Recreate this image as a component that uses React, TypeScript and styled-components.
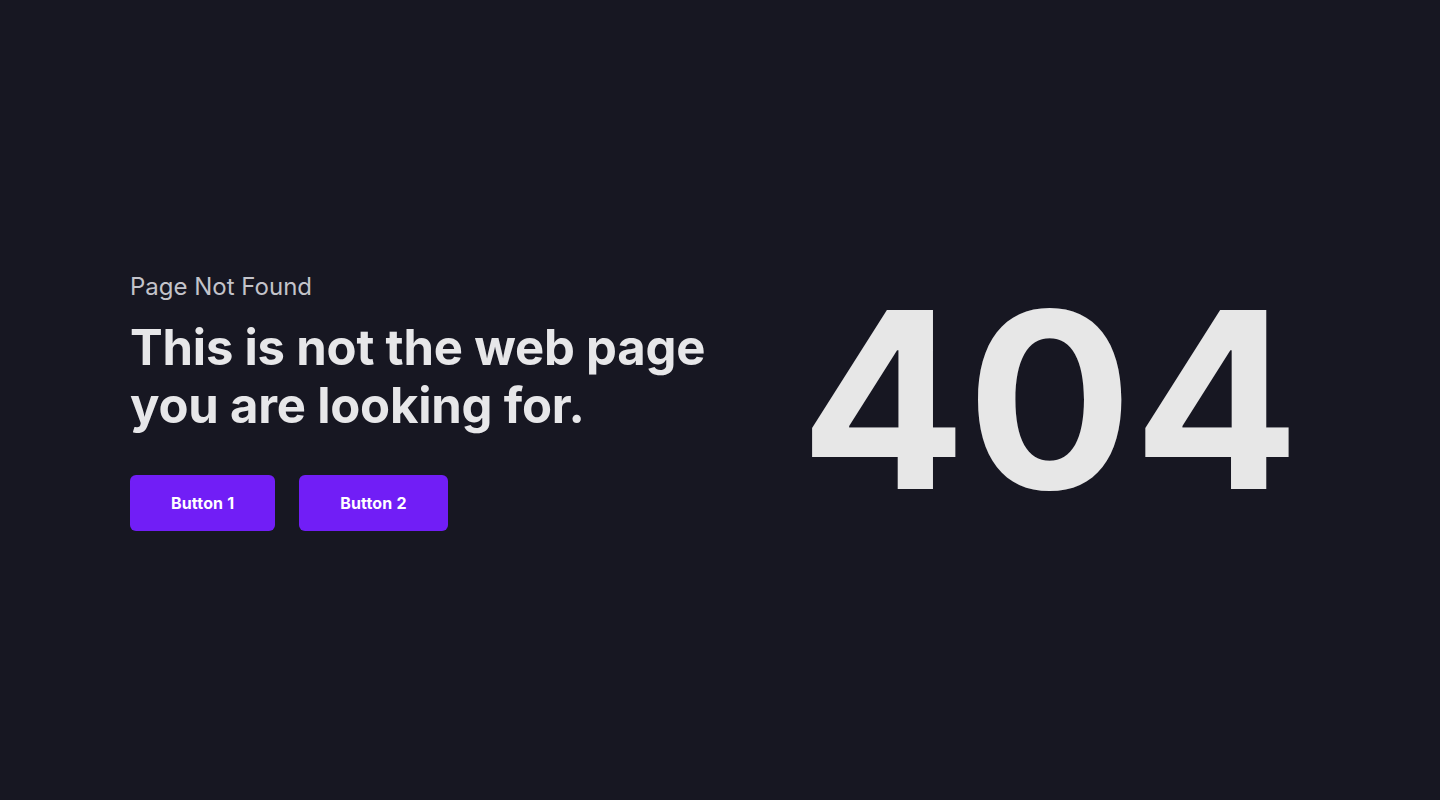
import React from "react";
import styled, { createGlobalStyle } from "styled-components";

const GlobalStyle = createGlobalStyle`
  html, body {
    margin: 0;
    padding: 0;
    background: #171722;
  }
  body {
    font-family: Inter, "Noto Sans", sans-serif;
  }
`;

const Page = styled.main`
  box-sizing: border-box;
  min-height: 100vh;
  padding: 0 130px;
  display: flex;
  align-items: center;
  justify-content: space-between;
  background: #171722;
`;

const Info = styled.section`
  display: flex;
  flex-direction: column;
  align-items: flex-start;
  margin-top: 2px;
`;

const Eyebrow = styled.p`
  margin: 0;
  font-size: 24px;
  line-height: 30px;
  font-weight: 400;
  color: #c3c3ca;
`;

const Heading = styled.h1`
  margin: 17px 0 0;
  font-size: 49px;
  line-height: 58px;
  font-weight: 700;
  color: #e7e7e9;
  letter-spacing: -0.2px;
`;

const Actions = styled.div`
  display: flex;
  gap: 24px;
  margin-top: 40px;
`;

const Button = styled.button`
  height: 56px;
  padding: 0 41px;
  border: none;
  border-radius: 6px;
  background: #711ef6;
  color: #ffffff;
  font-family: Inter, "Noto Sans", sans-serif;
  font-size: 16px;
  font-weight: 700;
  letter-spacing: 0.15px;
  cursor: pointer;
`;

const Code = styled.div`
  font-size: 246px;
  line-height: 1;
  font-weight: 700;
  color: #e7e7e7;
  letter-spacing: 0.5px;
  padding-right: 10px;
`;

export default function App() {
  return (
    <>
      <GlobalStyle />
      <Page>
        <Info>
          <Eyebrow>Page Not Found</Eyebrow>
          <Heading>
            This is not the web page
            <br />
            you are looking for.
          </Heading>
          <Actions>
            <Button>Button 1</Button>
            <Button>Button 2</Button>
          </Actions>
        </Info>
        <Code>404</Code>
      </Page>
    </>
  );
}
